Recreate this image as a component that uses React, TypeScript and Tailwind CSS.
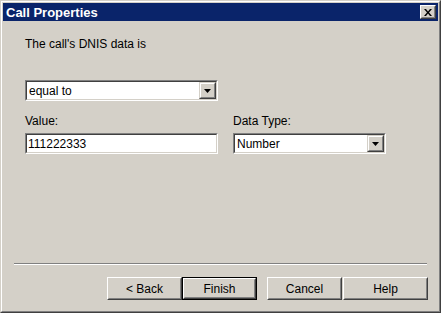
import { useState } from 'react'

const FONT = { fontFamily: '"Liberation Sans", Arial, sans-serif' }

function Arrow() {
  return (
    <svg width="7" height="4" viewBox="0 0 7 4">
      <path d="M0 0h7L3.5 4z" fill="#000" />
    </svg>
  )
}

function Combo({ value, width }: { value: string; width: string }) {
  return (
    <div className={`${width} h-[21px] border border-t-[#808080] border-l-[#808080] border-r-white border-b-white`}>
      <div className="h-full flex border border-t-[#404040] border-l-[#404040] border-r-[#d4d0c8] border-b-[#d4d0c8] bg-white">
        <div className="flex-1 flex items-center pl-[2px] text-[12px] text-black">{value}</div>
        <div className="w-[17px] h-full border border-t-[#d4d0c8] border-l-[#d4d0c8] border-r-[#404040] border-b-[#404040]">
          <div className="h-full flex items-center justify-center bg-[#d4d0c8] border border-t-white border-l-white border-r-[#808080] border-b-[#808080]">
            <Arrow />
          </div>
        </div>
      </div>
    </div>
  )
}

function Button({ label, width = 'w-[75px]', isDefault = false }: { label: string; width?: string; isDefault?: boolean }) {
  const face = (
    <div className="h-full border border-t-white border-l-white border-r-[#404040] border-b-[#404040]">
      <div className="h-full flex items-center justify-center border border-t-[#d4d0c8] border-l-[#d4d0c8] border-r-[#808080] border-b-[#808080] text-[12px] text-black">
        {label}
      </div>
    </div>
  )
  return (
    <button type="button" className={`${width} h-[23px] bg-[#d4d0c8] ${isDefault ? 'border border-black' : ''}`}>
      {face}
    </button>
  )
}

export default function App() {
  const [value, setValue] = useState('111222333')

  return (
    <div className="w-[441px] h-[313px] border border-t-[#d4d0c8] border-l-[#d4d0c8] border-r-[#404040] border-b-[#404040]" style={FONT}>
      <div className="h-full flex flex-col border border-t-white border-l-white border-r-[#808080] border-b-[#808080] bg-[#d4d0c8] p-px">
        {/* title bar */}
        <div className="h-[18px] flex items-center justify-between bg-[#0a246a] pl-[3px] pr-[2px]">
          <span className="text-white font-bold text-[13px] leading-none">Call Properties</span>
          <div className="w-[16px] h-[14px] border border-t-white border-l-white border-r-[#404040] border-b-[#404040] bg-[#d4d0c8]">
            <div className="h-full flex items-center justify-center border border-t-[#d4d0c8] border-l-[#d4d0c8] border-r-[#808080] border-b-[#808080]">
              <svg width="8" height="7" viewBox="0 0 8 7">
                <path d="M0 0h2l2 2.5L6 0h2L5 3.5 8 7H6L4 4.5 2 7H0l3-3.5z" fill="#000" />
              </svg>
            </div>
          </div>
        </div>

        {/* body */}
        <div className="flex-1 flex flex-col pl-[22px] pr-[10px]">
          <div className="mt-[17px] h-[13px] leading-[13px] text-[12px] text-black">The call's DNIS data is</div>
          <div className="mt-[29px]">
            <Combo value="equal to" width="w-[193px]" />
          </div>
          <div className="mt-[14px] flex gap-[15px]">
            <div className="flex flex-col">
              <div className="h-[13px] leading-[13px] text-[12px] text-black">Value:</div>
              <div className="mt-[5px] w-[193px] h-[21px] border border-t-[#808080] border-l-[#808080] border-r-white border-b-white">
                <div className="h-full border border-t-[#404040] border-l-[#404040] border-r-[#d4d0c8] border-b-[#d4d0c8] bg-white flex items-center">
                  <input
                    value={value}
                    onChange={(e) => setValue(e.target.value)}
                    className="w-full pl-[1px] text-[12px] text-black outline-none bg-transparent"
                    style={FONT}
                  />
                </div>
              </div>
            </div>
            <div className="flex flex-col">
              <div className="h-[13px] leading-[13px] text-[12px] text-black">Data Type:</div>
              <div className="mt-[5px]">
                <Combo value="Number" width="w-[153px]" />
              </div>
            </div>
          </div>

          <div className="mt-auto -ml-[11px] mr-px h-[2px] border-t border-t-[#808080] border-b border-b-white" />

          <div className="mt-[12px] mb-[10px] flex justify-end">
            <Button label="< Back" />
            <Button label="Finish" isDefault />
            <div className="w-[10px]" />
            <Button label="Cancel" />
            <div className="w-px" />
            <Button label="Help" width="w-[85px]" />
          </div>
        </div>
      </div>
    </div>
  )
}
